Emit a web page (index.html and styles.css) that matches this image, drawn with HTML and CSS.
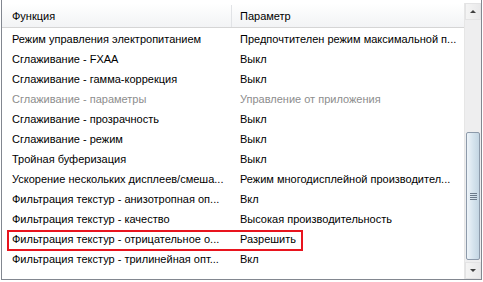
FILE: index.html
```html
<!DOCTYPE html>
<html lang="ru">
<head>
  <meta charset="UTF-8" />
  <title>Параметры 3D</title>
  <link rel="stylesheet" href="styles.css">
</head>
<body>
  <div class="listview">
    <div class="table">
      <div class="head">
        <div class="col-name">Функция</div>
        <div class="col-value">Параметр</div>
      </div>
      <div class="rows">
        <div class="row"><span class="col-name">Режим управления электропитанием</span><span class="col-value">Предпочтителен режим максимальной п...</span></div>
        <div class="row"><span class="col-name">Сглаживание - FXAA</span><span class="col-value">Выкл</span></div>
        <div class="row"><span class="col-name">Сглаживание - гамма-коррекция</span><span class="col-value">Выкл</span></div>
        <div class="row disabled"><span class="col-name">Сглаживание - параметры</span><span class="col-value">Управление от приложения</span></div>
        <div class="row"><span class="col-name">Сглаживание - прозрачность</span><span class="col-value">Выкл</span></div>
        <div class="row"><span class="col-name">Сглаживание - режим</span><span class="col-value">Выкл</span></div>
        <div class="row"><span class="col-name">Тройная буферизация</span><span class="col-value">Выкл</span></div>
        <div class="row"><span class="col-name">Ускорение нескольких дисплеев/смеша...</span><span class="col-value">Режим многодисплейной производител...</span></div>
        <div class="row"><span class="col-name">Фильтрация текстур - анизотропная оп...</span><span class="col-value">Вкл</span></div>
        <div class="row"><span class="col-name">Фильтрация текстур - качество</span><span class="col-value">Высокая производительность</span></div>
        <div class="row marked"><span class="col-name">Фильтрация текстур - отрицательное о...</span><span class="col-value">Разрешить</span></div>
        <div class="row"><span class="col-name">Фильтрация текстур - трилинейная опт...</span><span class="col-value">Вкл</span></div>
      </div>
    </div>
    <div class="scrollbar">
      <div class="sb-btn"><span class="arrow up"></span></div>
      <div class="sb-track">
        <div class="sb-thumb"><span class="grip"></span></div>
      </div>
      <div class="sb-btn"><span class="arrow down"></span></div>
    </div>
  </div>
</body>
</html>
```

FILE: styles.css
```css
* {
  box-sizing: border-box;
}

body {
  margin: 0;
  background: #fff;
  font-family: 'Liberation Sans', Arial, sans-serif;
  font-size: 11px;
  color: #000;
}

.listview {
  display: flex;
  width: 481px;
  height: 280px;
  margin-left: 1px;
  padding-top: 3px;
  border: 1px solid #828790;
  border-top: none;
  background: #fff;
}

.table {
  flex: 1;
  min-width: 0;
}

.head {
  display: flex;
  height: 25px;
  align-items: center;
  padding-top: 2px;
  background: linear-gradient(to bottom, #ffffff, #f2f3f5);
  border-bottom: 1px solid #d5d5d5;
}

.head .col-name {
  border-right: 1px solid #e1e3e6;
  height: 100%;
  display: flex;
  align-items: center;
}

.col-name {
  width: 230px;
  padding-left: 10px;
  flex: none;
  white-space: nowrap;
  overflow: hidden;
}

.col-value {
  padding-left: 8px;
  white-space: nowrap;
  overflow: hidden;
}

.row {
  display: flex;
  height: 20px;
  align-items: center;
  padding-top: 1px;
}

.row.disabled {
  color: #8d8d8d;
}

.row.marked {
  position: relative;
}

/* red highlight drawn over the row */
.row.marked::after {
  content: "";
  position: absolute;
  left: 5px;
  top: 2px;
  width: 292px;
  height: 17px;
  border: 2px solid #e8141e;
}

.scrollbar {
  width: 17px;
  flex: none;
  display: flex;
  flex-direction: column;
  background: #eeeeef;
  border-left: 1px solid #e6e6e6;
}

.sb-btn {
  height: 17px;
  display: flex;
  align-items: center;
  justify-content: center;
  background: linear-gradient(to right, #f4f4f4, #e9e9ea);
  border: 1px solid #e3e3e4;
}

.arrow {
  width: 0;
  height: 0;
  border-left: 3px solid transparent;
  border-right: 3px solid transparent;
}

.arrow.up {
  border-bottom: 3px solid #3f3f3f;
}

.arrow.down {
  border-top: 3px solid #3f3f3f;
}

.sb-track {
  flex: 1;
  display: flex;
  flex-direction: column;
  justify-content: flex-end;
  padding-bottom: 2px;
}

.sb-thumb {
  height: 128px;
  margin: 0 1px;
  border: 1px solid #8c9aaa;
  border-radius: 2px;
  background: linear-gradient(to right, #eef4f9, #d6e4ee 50%, #c4d6e3);
  display: flex;
  align-items: center;
  justify-content: center;
}

.grip {
  width: 7px;
  height: 7px;
  background: repeating-linear-gradient(to bottom, #6b7a8a 0 1px, transparent 1px 2px);
}
```
